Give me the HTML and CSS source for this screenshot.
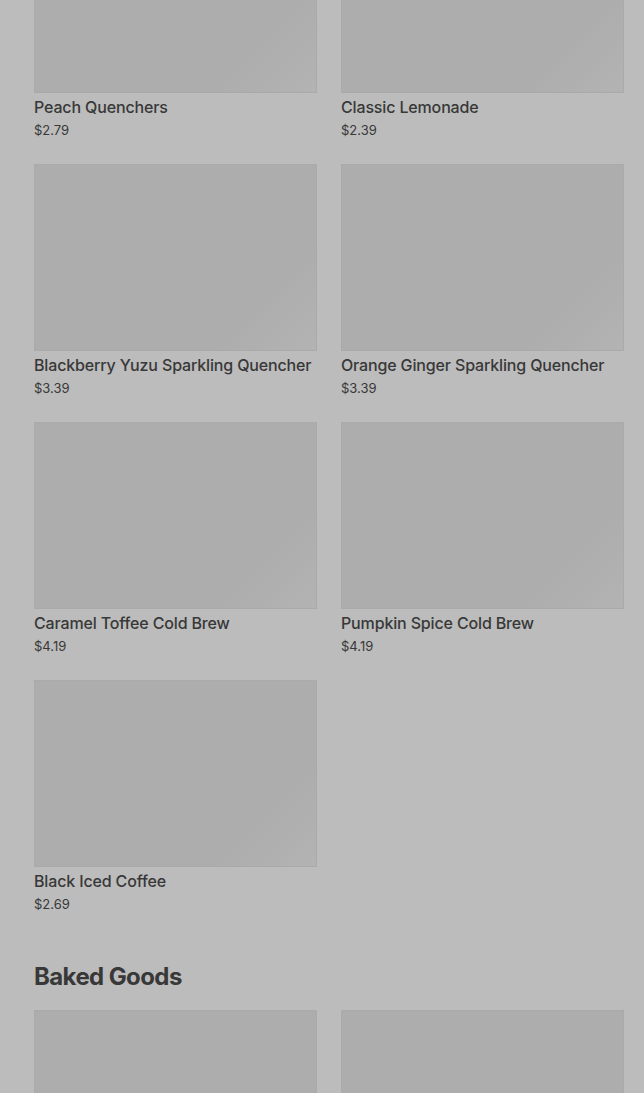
FILE: index.html
```html
<!DOCTYPE html>
<html lang="en">
<head>
  <meta charset="UTF-8">
  <meta name="viewport" content="width=device-width, initial-scale=1.0">
  <title>Menu</title>
  <link rel="stylesheet" href="styles.css">
</head>
<body>
  <div class="menu">
    <section class="category category-first">
      <div class="product-grid">
        <div class="product">
          <div class="product-image"></div>
          <div class="product-name">Peach Quenchers</div>
          <div class="product-price">$2.79</div>
        </div>
        <div class="product">
          <div class="product-image"></div>
          <div class="product-name">Classic Lemonade</div>
          <div class="product-price">$2.39</div>
        </div>
        <div class="product">
          <div class="product-image"></div>
          <div class="product-name">Blackberry Yuzu Sparkling Quencher</div>
          <div class="product-price">$3.39</div>
        </div>
        <div class="product">
          <div class="product-image"></div>
          <div class="product-name">Orange Ginger Sparkling Quencher</div>
          <div class="product-price">$3.39</div>
        </div>
        <div class="product">
          <div class="product-image"></div>
          <div class="product-name">Caramel Toffee Cold Brew</div>
          <div class="product-price">$4.19</div>
        </div>
        <div class="product">
          <div class="product-image"></div>
          <div class="product-name">Pumpkin Spice Cold Brew</div>
          <div class="product-price">$4.19</div>
        </div>
        <div class="product">
          <div class="product-image"></div>
          <div class="product-name">Black Iced Coffee</div>
          <div class="product-price">$2.69</div>
        </div>
      </div>
    </section>

    <section class="category">
      <h2 class="category-title">Baked Goods</h2>
      <div class="product-grid">
        <div class="product">
          <div class="product-image"></div>
        </div>
        <div class="product">
          <div class="product-image"></div>
        </div>
      </div>
    </section>
  </div>
</body>
</html>
```

FILE: styles.css
```css
body {
  margin: 0;
  background: #bcbcbc;
  font-family: Inter, "Open Sans", sans-serif;
  color: #383838;
  overflow: hidden;
}

.menu {
  padding: 0 20px 0 34px;
}

.category-first {
  margin-top: -94px;
}

.category-title {
  margin: 49px 0 18px;
  font-size: 24px;
  line-height: 30px;
  font-weight: 700;
  letter-spacing: -0.6px;
  color: #383838;
}

.product-grid {
  display: grid;
  grid-template-columns: 283px 283px;
  column-gap: 24px;
  row-gap: 25px;
}

.product-image {
  height: 187px;
  box-sizing: border-box;
  border: 1px solid #aaaaaa;
  background: linear-gradient(135deg, #adadad 0%, #adadad 78%, #b3b3b3 100%);
}

.product-name {
  margin-top: 4px;
  font-size: 16px;
  line-height: 20px;
  font-weight: 500;
  letter-spacing: -0.15px;
  white-space: nowrap;
}

.product-price {
  margin-top: 4px;
  font-size: 13px;
  line-height: 18px;
}
```
